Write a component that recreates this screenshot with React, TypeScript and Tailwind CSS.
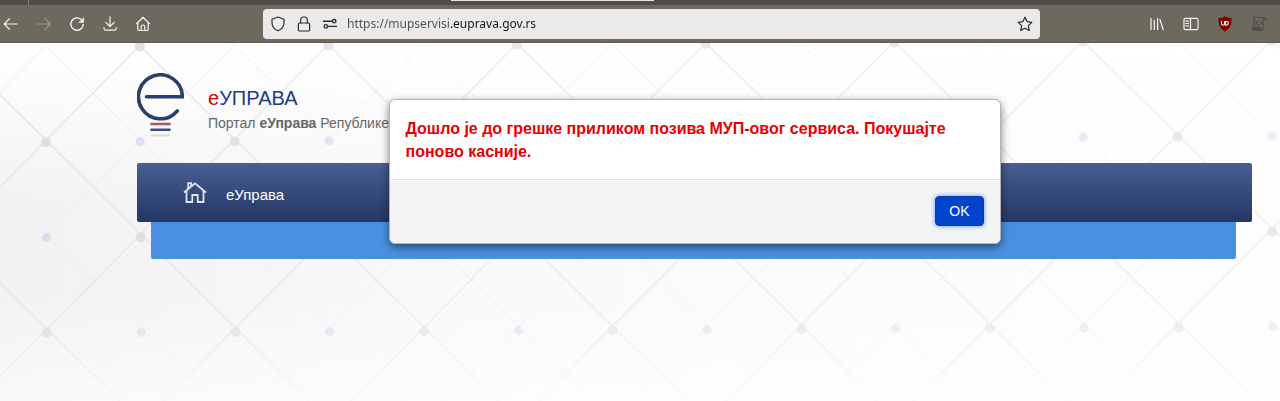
import { useState } from "react";
import type { ReactNode } from "react";

const GREY = "#dadae0";
const VIOLET = "#dcd8ee";
const LINES = Array.from({ length: 21 }, (_, i) => i);
const COLS = Array.from({ length: 14 }, (_, i) => i);
const ROWS = [0, 1, 2, 3];

function Backdrop() {
  return (
    <svg
      className="absolute inset-0 h-full w-full"
      viewBox="0 0 1280 358"
      preserveAspectRatio="xMinYMin slice"
      aria-hidden="true"
    >
      <defs>
        <linearGradient id="fadeX" x1="0" x2="1" y1="0" y2="0">
          <stop offset="0" stopColor="#fff" />
          <stop offset="0.3" stopColor="#bbb" />
          <stop offset="1" stopColor="#999" />
        </linearGradient>
        <linearGradient id="fadeY" x1="0" x2="0" y1="0" y2="1">
          <stop offset="0.7" stopColor="#000" stopOpacity="0" />
          <stop offset="1" stopColor="#000" stopOpacity="0.8" />
        </linearGradient>
        <mask id="fade" maskUnits="userSpaceOnUse" x="0" y="0" width="1280" height="358">
          <rect width="1280" height="358" fill="url(#fadeX)" />
          <rect width="1280" height="358" fill="url(#fadeY)" />
        </mask>
        <linearGradient id="shadeY" x1="0" x2="0" y1="0" y2="1">
          <stop offset="0" stopColor="#fff" />
          <stop offset="0.45" stopColor="#fff" stopOpacity="0" />
          <stop offset="0.7" stopColor="#fff" stopOpacity="0" />
          <stop offset="1" stopColor="#fff" stopOpacity="0.6" />
        </linearGradient>
        <linearGradient id="shadeX" x1="0" x2="1" y1="0" y2="0">
          <stop offset="0" stopColor="#f2f2f2" />
          <stop offset="0.35" stopColor="#f9f9f9" />
          <stop offset="1" stopColor="#fefefe" />
        </linearGradient>
      </defs>
      <rect width="1280" height="358" fill="url(#shadeX)" />
      <rect width="1280" height="358" fill="url(#shadeY)" />
      <g mask="url(#fade)">
        <g transform="rotate(-0.28 46 99)">
          {LINES.map((c) => {
            const x = 46 + (c - 4) * 94.3;
            const main = c % 2 === 1;
            return (
              <g key={c} stroke={main ? "#e6e6ec" : "#ececf3"} strokeWidth={main ? 1.8 : 1.4}>
                <path d={`M${x} 3l382 382`} opacity={main ? 0.9 : 0.5} />
                <path d={`M${x} 3l-382 382`} opacity={main ? 0.9 : 0.5} />
              </g>
            );
          })}
          {ROWS.map((r) =>
            COLS.map((c) => {
              const main = (r + c) % 2 === 1;
              if (r === 0 && !main) return null;
              return (
                <circle
                  key={`${r}-${c}`}
                  cx={46 + c * 94.3}
                  cy={4 + r * 95.3}
                  r={main ? 5 : 4.5}
                  fill={main ? GREY : VIOLET}
                  opacity={0.9}
                />
              );
            })
          )}
        </g>
      </g>
    </svg>
  );
}

function Icon({ children, className = "" }: { children: ReactNode; className?: string }) {
  return (
    <svg
      viewBox="0 0 16 16"
      className={`size-4 shrink-0 ${className}`}
      fill="none"
      stroke="currentColor"
      strokeWidth="1.2"
      strokeLinecap="round"
      strokeLinejoin="round"
      aria-hidden="true"
    >
      {children}
    </svg>
  );
}

function ToolButton({ label, dim, children }: { label: string; dim?: boolean; children: ReactNode }) {
  return (
    <button type="button" aria-label={label} className={dim ? "text-[#9c988c]" : "text-[#f5f4f2]"}>
      {children}
    </button>
  );
}

function BrowserBar() {
  const [url, setUrl] = useState("https://mupservisi.euprava.gov.rs");

  return (
    <header>
      {/* Tab strip */}
      <div className="flex h-[5px] bg-[#524c46]">
        <div className="w-[29px] border-r border-[#857f75]" />
        <div className="ml-[422px] h-px w-[203px] bg-[#e8e6e2]" />
      </div>
      <div className="flex h-[38px] items-center border-b border-[#605b50] bg-[#6e695d] pr-[13px] pl-[3px]">
        <div className="flex gap-[17px]">
          <ToolButton label="Назад">
            <Icon>
              <path d="M14 8H1.5M6.500 2.700L1.200 8l5.300 5.300" />
            </Icon>
          </ToolButton>
          <ToolButton label="Напред" dim>
            <Icon>
              <path d="M1.500 8H14M9 2.700L14.300 8 9 13.300" />
            </Icon>
          </ToolButton>
          <ToolButton label="Освежи">
            <Icon>
              <path d="M14.200 8.500A6.200 6.200 0 1 1 12 3.300" strokeWidth="1.400" />
              <path d="M14.600 2v4.400h-4.400z" fill="currentColor" strokeWidth="0.600" />
            </Icon>
          </ToolButton>
          <ToolButton label="Преузимања">
            <Icon>
              <path d="M8 0.800v9.400M3.800 6.300L8 10.500l4.200-4.200M2 11.500v.9c0 1 .7 1.800 1.800 1.800h8.600c1 0 1.800-.8 1.800-1.800v-.9" />
            </Icon>
          </ToolButton>
          <ToolButton label="Почетна">
            <Icon>
              <path d="M1.500 7.700L8 1.300l6.500 6.400M2.800 6.700v6.500c0 .8.5 1.300 1.300 1.300h7.800c.8 0 1.300-.5 1.300-1.300V6.700" />
              <path d="M6.200 14.300v-3.500a1.800 1.800 0 0 1 3.600 0v3.500" />
            </Icon>
          </ToolButton>
        </div>

        <form
          className="mr-[109px] ml-[112px] flex h-[30px] flex-1 items-center rounded-sm bg-[#ebeae8] px-[7px] text-[#2b2a2e]"
          onSubmit={(e) => e.preventDefault()}
        >
          <Icon>
            <path d="M8 1L14 3.300v3.400c0 3.800-2.600 6.600-6 8.100-3.400-1.500-6-4.300-6-8.100V3.300z" />
          </Icon>
          <Icon className="ml-[10px]">
            <rect x="2.400" y="7" width="11.200" height="8" rx="1.300" />
            <path d="M4.600 7V4.400a3.400 3.400 0 0 1 6.800 0V7" />
          </Icon>
          <Icon className="ml-[10px]">
            <path d="M1.500 5.200h8M6.500 10.400h8" strokeWidth="1.400" />
            <circle cx="12.200" cy="5.200" r="1.700" strokeWidth="1.300" />
            <circle cx="3.800" cy="10.400" r="1.700" strokeWidth="1.300" />
          </Icon>
          <input
            type="text"
            aria-label="Адреса"
            value={url}
            onChange={(e) => setUrl(e.target.value)}
            className="ml-[9px] min-w-0 flex-1 bg-[linear-gradient(90deg,#4f4e50_104px,#15141a_104px)] bg-clip-text font-['Noto_Sans','Open_Sans',sans-serif] text-[12px] text-transparent caret-black outline-none"
          />
          <button type="button" aria-label="Обележи страницу">
            <Icon>
              <path d="M8 1.200l2.100 4.400 4.700.7-3.400 3.400.8 4.800L8 12.200l-4.200 2.300.8-4.800L1.200 6.300l4.700-.7z" />
            </Icon>
          </button>
        </form>

        <div className="flex gap-[18px]">
          <ToolButton label="Библиотека">
            <Icon>
              <path d="M2 2v12M5.300 4v10M8.600 2v12M10.800 3l3.500 11" strokeLinecap="butt" />
            </Icon>
          </ToolButton>
          <ToolButton label="Бочна трака">
            <Icon>
              <rect x="1" y="2.300" width="14" height="11.400" rx="1.500" />
              <path d="M7.500 2.500v11M3 5.200h2.500M3 7.500h2.500M3 9.800h2.500" />
            </Icon>
          </ToolButton>
          <ToolButton label="uBlock Origin">
            <Icon>
              <path
                d="M8 1c2 1.300 4 1.700 6 1.700 0 6-1 9-6 12.300-5-3.300-6-6.300-6-12.300C4 2.700 6 2.300 8 1z"
                fill="#800000"
                stroke="#800000"
              />
              <path d="M4.500 5.500v2.200a1.500 1.500 0 0 0 3 0V5.500M8.500 5.500v3.700h1a1.800 1.800 0 0 0 0-3.700z" strokeWidth="1.100" />
            </Icon>
          </ToolButton>
          <button type="button" aria-label="Скрипте" className="text-[#514e49]">
            <Icon>
              <path d="M3 11V3.200C3 2 3.700 1.500 4.700 1.500h9c-1 0-1.500.6-1.500 1.600v9.400c0 1-.6 1.700-1.600 1.700" />
              <path d="M13.700 1.500c1.300 0 1.500 1 1.500 2.200h-2.700" />
              <path d="M1 11.300h8.300c0 1.500.4 2.500 1.400 2.900H3c-1.300 0-2-1-2-2.900z" fill="currentColor" />
              <path d="M6.700 5.300L5 7l1.700 1.700M9 5.300L10.700 7 9 8.700" />
            </Icon>
          </button>
        </div>
      </div>
    </header>
  );
}

function Logo() {
  return (
    <svg viewBox="0 0 47 64" className="h-[64px] w-[47px] shrink-0" fill="none" aria-hidden="true">
      <path d="M9.500 23.700H45.300A21.900 22 0 1 0 40.300 37.800" stroke="#28406f" strokeWidth="3.600" strokeLinecap="round" />
      <path d="M14.500 51h18" stroke="#b8505a" strokeWidth="2.600" strokeLinecap="round" />
      <path d="M14.500 56.800h18" stroke="#3c4c80" strokeWidth="2.600" strokeLinecap="round" />
      <path d="M14.500 62.500h18" stroke="#dedcd6" strokeWidth="2" strokeLinecap="round" />
    </svg>
  );
}

function ErrorDialog({ onClose }: { onClose: () => void }) {
  return (
    <div
      role="alertdialog"
      aria-labelledby="error-text"
      className="absolute inset-x-0 top-[56px] mx-auto w-[612px] overflow-hidden rounded-md border border-[#b4b4b4] bg-white shadow-[0_3px_9px_rgba(0,0,0,0.5)]"
    >
      <p id="error-text" className="px-4 pt-[17px] pb-4 text-[16px] leading-[23px] font-bold text-[#e60000]">
        Дошло је до грешке приликом позива МУП-овог сервиса. Покушајте поново касније.
      </p>
      <div className="flex justify-end border-t border-[#e2e2e2] bg-[#f4f4f4] px-4 pt-4 pb-[17px] shadow-[inset_0_1px_0_#fff]">
        <button
          type="button"
          onClick={onClose}
          className="h-[30px] rounded-sm border border-[#0a3cb0] bg-[#0044cc] px-[13px] text-[14px] leading-5 text-white shadow-[0_0_5px_#5a9bf5]"
        >
          OK
        </button>
      </div>
    </div>
  );
}

export default function App() {
  const [open, setOpen] = useState(true);

  return (
    <div className="flex min-h-screen flex-col bg-white font-['Liberation_Sans',Arial,sans-serif]">
      <BrowserBar />
      <main className="relative flex-1 overflow-hidden">
        <Backdrop />
        <div className="relative mr-[28px] ml-[137px]">
          <div className="flex h-[120px] gap-6 pt-[30px]">
            <Logo />
            <div className="pt-3">
              <h1 className="text-[20px] leading-[26px] text-[#1f3a7d]">
                <span className="text-[#d40000]">е</span>УПРАВА
              </h1>
              <p className="text-[14px] leading-6 text-[#666]">
                Портал <strong>еУправа</strong> Републике Србије
              </p>
            </div>
          </div>

          <nav className="flex h-[59px] items-center rounded-xs bg-linear-to-b from-[#495f92] to-[#243765] pl-[46px]">
            <a href="#" className="flex items-center gap-[19px] text-[15px] text-white">
              <svg
                viewBox="0 0 24 22"
                className="h-[22px] w-[24px]"
                fill="none"
                stroke="#dfe5f2"
                strokeWidth="1.800"
                aria-hidden="true"
              >
                <path d="M1 10.500L12 1.300l11 9.200" />
                <path d="M3.500 9V20h5.800v-7h5.400v7h5.800V9" />
                <path d="M5.200 7V1.200h3v3.200" />
              </svg>
              <span className="pt-[6px]">еУправа</span>
            </a>
          </nav>
          <div className="mr-[16px] ml-[14px] h-[37px] rounded-b-xs bg-[#4a90e2]" />

          {open && <ErrorDialog onClose={() => setOpen(false)} />}
        </div>
      </main>
    </div>
  );
}
